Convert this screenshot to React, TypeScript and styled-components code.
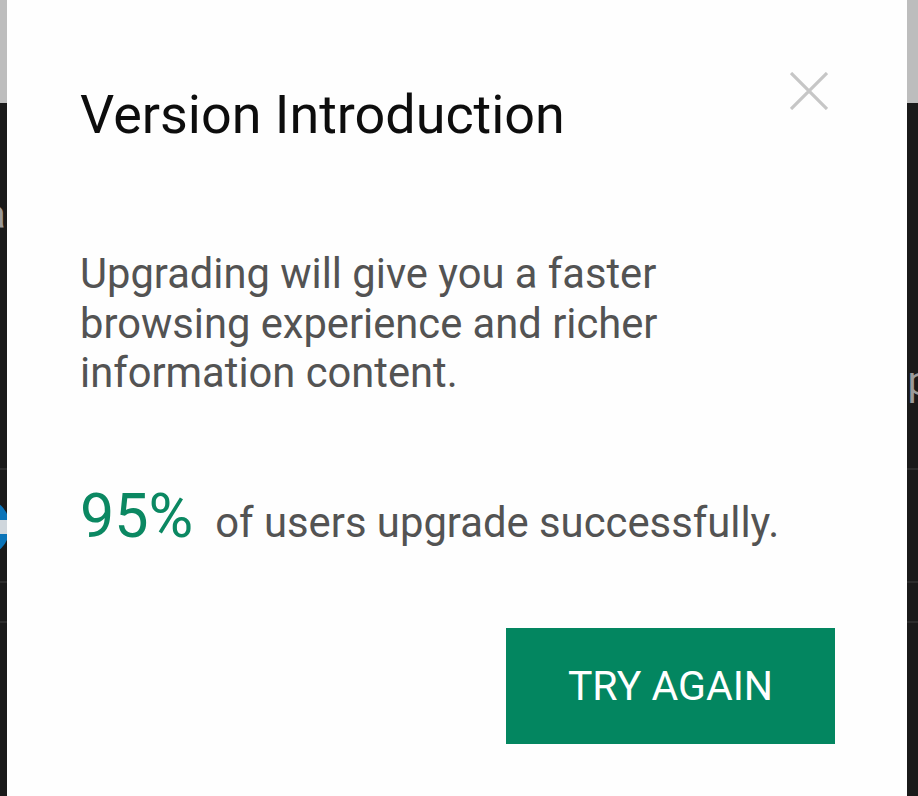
import React from 'react';
import styled, { createGlobalStyle } from 'styled-components';

const GlobalStyle = createGlobalStyle`
  html, body {
    margin: 0;
    padding: 0;
    background: #1a1a1a;
  }
  body {
    font-family: Roboto, "Liberation Sans", Arial, sans-serif;
  }
`;

const Screen = styled.div`
  position: relative;
  width: 918px;
  height: 796px;
  overflow: hidden;
  background: #1a1a1a;
`;

/* page that sits behind the dialog */
const AppBar = styled.div`
  height: 103px;
  background: #bdbdbd;
`;

const ListItem = styled.div<{ $height: number }>`
  height: ${(p) => p.$height}px;
  border-bottom: 2px solid #2c2c2c;
  box-sizing: border-box;
  display: flex;
  align-items: flex-start;
  justify-content: space-between;
  color: #9a9a9a;
  font-size: 40px;
  line-height: 48px;
`;

const PeekText = styled.span<{ $top: number }>`
  margin-top: ${(p) => p.$top}px;
  margin-left: -16px;
`;

const PeekRight = styled.span<{ $top: number }>`
  margin-top: ${(p) => p.$top}px;
  margin-right: -12px;
`;

const Avatar = styled.div`
  width: 60px;
  height: 60px;
  margin: 27px 0 0 -50px;
  border-radius: 50%;
  background: #0b74b8;
  display: flex;
  align-items: center;
  justify-content: flex-end;
  padding-right: 2px;
  box-sizing: border-box;
`;

const AvatarChip = styled.div`
  width: 8px;
  height: 14px;
  background: #cfd6dc;
`;

/* dialog */
const Dialog = styled.div`
  position: absolute;
  left: 7px;
  top: 0;
  width: 900px;
  height: 830px;
  background: #fefefe;
  box-sizing: border-box;
  padding: 72px 72px 0 73px;
  display: flex;
  flex-direction: column;
`;

const Header = styled.div`
  display: flex;
  justify-content: space-between;
  align-items: flex-start;
`;

const Title = styled.h1`
  margin: 11px 0 0;
  font-size: 53.9px;
  line-height: 64px;
  font-weight: 400;
  color: #0d0d0d;
`;

const CloseButton = styled.button`
  width: 38px;
  height: 38px;
  margin-right: 7px;
  padding: 0;
  border: none;
  background: none;
  cursor: pointer;
  display: block;
`;

const Message = styled.p`
  margin: 102px 0 0;
  font-size: 41.7px;
  line-height: 49.5px;
  color: #535353;
  width: 620px;
`;

const Stats = styled.div`
  margin-top: 88px;
  display: flex;
  align-items: baseline;
  color: #535353;
  font-size: 41.8px;
  line-height: 1.2;
`;

const Percent = styled.span`
  font-size: 61px;
  line-height: 1;
  color: #0b8862;
  margin-right: 22px;
`;

const Footer = styled.div`
  margin-top: 80px;
  display: flex;
  justify-content: flex-end;
`;

const PrimaryButton = styled.button`
  width: 329px;
  height: 116px;
  border: none;
  border-radius: 0;
  background: #038660;
  color: #ffffff;
  font-family: Roboto, "Liberation Sans", Arial, sans-serif;
  font-size: 41px;
  font-weight: 400;
  padding: 0;
  cursor: pointer;
`;

const CloseIcon = () => (
  <svg width="38" height="38" viewBox="0 0 38 38">
    <path d="M1 1 L37 37 M37 1 L1 37" stroke="#c6c6c6" strokeWidth="3.2" fill="none" />
  </svg>
);

export default function App() {
  return (
    <>
      <GlobalStyle />
      <Screen>
        <AppBar />
        <ListItem $height={367}>
          <PeekText $top={88}>a</PeekText>
          <PeekRight $top={255}>p</PeekRight>
        </ListItem>
        <ListItem $height={113}>
          <Avatar>
            <AvatarChip />
          </Avatar>
        </ListItem>
        <ListItem $height={40} />

        <Dialog>
          <Header>
            <Title>Version Introduction</Title>
            <CloseButton aria-label="Close">
              <CloseIcon />
            </CloseButton>
          </Header>
          <Message>
            Upgrading will give you a faster browsing experience and richer information content.
          </Message>
          <Stats>
            <Percent>95%</Percent>
            <span>of users upgrade successfully.</span>
          </Stats>
          <Footer>
            <PrimaryButton>TRY AGAIN</PrimaryButton>
          </Footer>
        </Dialog>
      </Screen>
    </>
  );
}
